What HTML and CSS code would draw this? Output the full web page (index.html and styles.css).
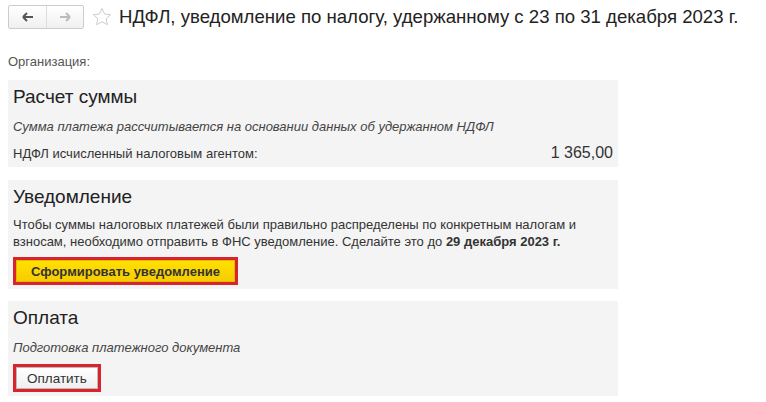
FILE: index.html
```html
<!DOCTYPE html>
<html lang="ru">
<head>
  <meta charset="UTF-8">
  <title>НДФЛ, уведомление по налогу</title>
  <link rel="stylesheet" href="styles.css">
</head>
<body>
  <div class="header">
    <div class="nav">
      <button class="nav-btn">
        <svg width="12" height="10" viewBox="0 0 12 10"><path d="M1 5h10M1 5l4-4M1 5l4 4" stroke="#555" stroke-width="2" fill="none"/></svg>
      </button>
      <button class="nav-btn">
        <svg width="12" height="10" viewBox="0 0 12 10"><path d="M11 5H1M11 5L7 1M11 5L7 9" stroke="#bbb" stroke-width="2" fill="none"/></svg>
      </button>
    </div>
    <svg class="star" width="20" height="20" viewBox="0 0 20 20"><path d="M10 1.5l2.6 5.5 6 .7-4.4 4.1 1.2 5.9L10 14.8l-5.4 2.9 1.2-5.9L1.4 7.7l6-.7z" fill="none" stroke="#ccc" stroke-width="1"/></svg>
    <h1>НДФЛ, уведомление по налогу, удержанному с 23 по 31 декабря 2023 г.</h1>
  </div>

  <div class="org">Организация:</div>

  <div class="panel">
    <h2>Расчет суммы</h2>
    <p class="note">Сумма платежа рассчитывается на основании данных об удержанном НДФЛ</p>
    <div class="row">
      <span>НДФЛ исчисленный налоговым агентом:</span>
      <span class="amount">1 365,00</span>
    </div>
  </div>

  <div class="panel">
    <h2>Уведомление</h2>
    <p class="text">Чтобы суммы налоговых платежей были правильно распределены по конкретным налогам и взносам, необходимо отправить в ФНС уведомление. Сделайте это до <b>29 декабря 2023 г.</b></p>
    <div class="frame"><button class="btn btn-yellow">Сформировать уведомление</button></div>
  </div>

  <div class="panel">
    <h2>Оплата</h2>
    <p class="note">Подготовка платежного документа</p>
    <div class="frame"><button class="btn btn-plain">Оплатить</button></div>
  </div>
</body>
</html>
```

FILE: styles.css
```css
body {
  margin: 0;
  padding: 0 8px;
  font-family: "Liberation Sans", Arial, sans-serif;
  font-size: 13px;
  color: #333;
  background: #fff;
}
.header {
  display: flex;
  align-items: center;
  height: 34px;
  white-space: nowrap;
}
.nav {
  display: flex;
  flex-shrink: 0;
  border: 1px solid #ccc;
  border-radius: 2px;
  background: linear-gradient(#fff, #f0f0f0);
}
.nav-btn {
  width: 37px;
  height: 22px;
  border: none;
  background: transparent;
  padding: 0;
  display: flex;
  align-items: center;
  justify-content: center;
}
.nav-btn + .nav-btn {
  border-left: 1px solid #ddd;
}
.star {
  flex-shrink: 0;
  margin-left: 8px;
  margin-right: 7px;
}
h1 {
  margin: 0;
  font-size: 18.6px;
  font-weight: normal;
  color: #222;
}
.org {
  color: #555;
  margin-top: 20px;
  height: 26px;
  line-height: 15px;
}
.panel {
  width: 600px;
  background: #f4f4f4;
  padding: 4px 5px;
  margin-bottom: 13px;
}
.panel + .panel + .panel {
  margin-top: -1px;
}
h2 {
  margin: 0;
  font-size: 19px;
  font-weight: normal;
  color: #222;
  line-height: 26px;
}
.note {
  margin: 8px 0 0;
  font-style: italic;
  line-height: 18px;
  color: #444;
}
.row {
  display: flex;
  justify-content: space-between;
  align-items: baseline;
  line-height: 18px;
  margin-top: 8px;
}
.amount {
  font-size: 16px;
}
.text {
  margin: 6px 0 0;
  line-height: 17px;
}
.frame {
  width: fit-content;
  border: 3px solid #d9232d;
  margin-top: 7px;
}
.btn {
  display: block;
  font-family: inherit;
  font-size: 13px;
  height: 22px;
  padding: 0 14px;
  border: 1px solid #bbb;
  color: #333;
}
.btn-yellow {
  background: linear-gradient(#ffe000, #f7cc00);
  border-color: #e0b800;
  font-weight: bold;
}
.btn-plain {
  font-size: 13.5px;
  padding: 0 10px;
  background: linear-gradient(#fff, #efefef);
}
```
